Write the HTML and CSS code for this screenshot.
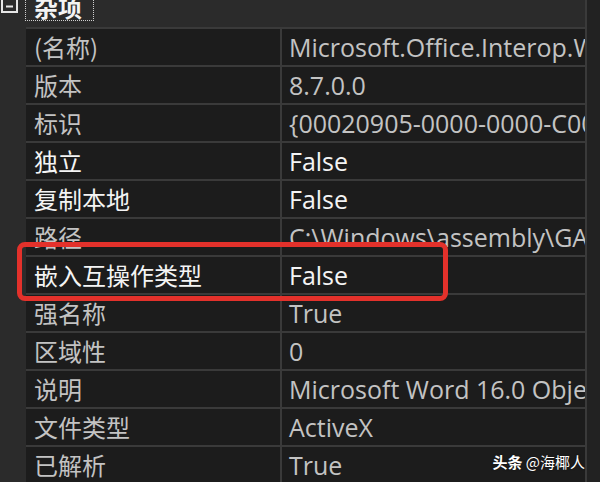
FILE: index.html
```html
<!DOCTYPE html>
<html lang="zh-CN">
<head>
<meta charset="utf-8">
<title>属性</title>
<link rel="stylesheet" href="styles.css">
</head>
<body>
<div class="pane">
  <div class="main">
    <div class="cat">
      <div class="toggle">
        <svg width="18" height="17" viewBox="0 0 18 17"><rect x="2" y="1" width="15" height="15" fill="none" stroke="#e6e6e6" stroke-width="2"/><line x1="6" y1="10.5" x2="13" y2="10.5" stroke="#e6e6e6" stroke-width="2"/></svg>
      </div>
      <span class="cat-label">杂项</span>
    </div>
    <div class="body">
      <div class="gutter"></div>
      <div class="rows">
        <div class="row"><div class="name">(名称)</div><div class="value">Microsoft.Office.Interop.Word</div></div>
        <div class="row"><div class="name">版本</div><div class="value">8.7.0.0</div></div>
        <div class="row"><div class="name">标识</div><div class="value">{00020905-0000-0000-C000-000000000046}</div></div>
        <div class="row edit"><div class="name">独立</div><div class="value">False</div></div>
        <div class="row edit"><div class="name">复制本地</div><div class="value">False</div></div>
        <div class="row"><div class="name">路径</div><div class="value">C:\Windows\assembly\GAC_MSIL\Microsoft.Office.Interop.Word</div></div>
        <div class="row edit"><div class="name">嵌入互操作类型</div><div class="value">False</div></div>
        <div class="row"><div class="name">强名称</div><div class="value">True</div></div>
        <div class="row"><div class="name">区域性</div><div class="value">0</div></div>
        <div class="row"><div class="name">说明</div><div class="value">Microsoft Word 16.0 Object Library</div></div>
        <div class="row"><div class="name">文件类型</div><div class="value">ActiveX</div></div>
        <div class="row"><div class="name">已解析</div><div class="value">True</div></div>
      </div>
    </div>
  </div>
  <div class="edge"></div>
  <div class="highlight"></div>
  <div class="watermark"><b>头条</b> @海椰人</div>
</div>
</body>
</html>
```
FILE: styles.css
```css
html, body {
  margin: 0;
  padding: 0;
  background: #1c1c1c;
}
.pane {
  position: relative;
  width: 600px;
  height: 482px;
  overflow: hidden;
  display: flex;
  font-family: "Open Sans", "Noto Sans CJK SC", sans-serif;
  font-size: 25px;
  color: #c3c3c3;
}
.main {
  width: 585px;
  display: flex;
  flex-direction: column;
}
.edge {
  width: 15px;
  border-left: 2px solid #3a3a3a;
  background: #222222;
  box-sizing: border-box;
}
.cat {
  height: 27px;
  background: #2b2b2b;
  display: flex;
  align-items: flex-end;
  flex-shrink: 0;
}
.toggle {
  width: 26px;
  height: 27px;
  position: relative;
  overflow: hidden;
}
.toggle svg {
  display: block;
  margin-top: -4px;
}
.cat-label {
  height: 26px;
  line-height: 26px;
  margin-top: -6px;
  align-self: flex-start;
  padding: 0 11px 0 8px;
  margin-left: -1px;
  border: 1px dotted #cfcfcf;
  border-top: none;
  color: #f4f4f4;
  font-family: "Noto Sans CJK SC", sans-serif;
  font-weight: 700;
  font-size: 24px;
  box-sizing: content-box;
}
.body {
  flex: 1;
  display: flex;
}
.gutter {
  width: 26px;
  background: #2b2b2b;
  flex-shrink: 0;
}
.rows {
  flex: 1;
  display: flex;
  flex-direction: column;
  min-width: 0;
}
.row {
  height: 38px;
  flex-shrink: 0;
  border-top: 2px solid #3a3a3a;
  box-sizing: border-box;
  display: flex;
  background: #1c1c1c;
}
.name {
  width: 256px;
  flex-shrink: 0;
  border-right: 2px solid #3a3a3a;
  padding-left: 8px;
  box-sizing: border-box;
  font-family: "Noto Sans CJK SC", sans-serif;
  font-size: 24px;
  line-height: 36px;
  white-space: nowrap;
}
.value {
  flex: 1;
  min-width: 0;
  padding-left: 7px;
  line-height: 36px;
  white-space: nowrap;
  overflow: hidden;
}
.edit .name,
.edit .value {
  color: #f4f4f4;
}
.highlight {
  position: absolute;
  left: 17px;
  top: 242px;
  width: 431px;
  height: 59px;
  border: 5px solid #e3312b;
  border-radius: 8px;
  box-sizing: border-box;
}
.watermark {
  position: absolute;
  right: 15px;
  bottom: 10px;
  color: #ffffff;
  font-family: "Noto Sans CJK SC", sans-serif;
  font-size: 15px;
  line-height: 20px;
  text-shadow: 0 0 2px rgba(0,0,0,0.6);
}
.watermark b {
  font-weight: 700;
}
```
